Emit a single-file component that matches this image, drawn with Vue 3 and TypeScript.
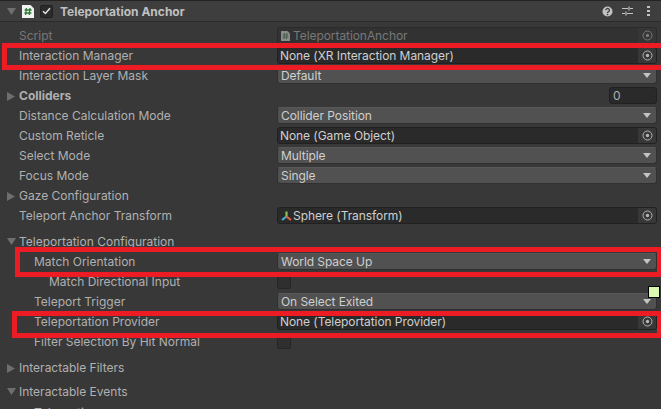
<script setup lang="ts">
type Kind = 'none' | 'object' | 'dropdown' | 'toggle' | 'number' | 'script' | 'transform'
interface Row {
  label: string
  level?: number
  fold?: 'open' | 'closed'
  bold?: boolean
  dim?: boolean
  kind: Kind
  value?: string
  gap?: number
}
const rows: Row[] = [
  { label: 'Script', kind: 'script', value: 'TeleportationAnchor', dim: true },
  { label: 'Interaction Manager', kind: 'object', value: 'None (XR Interaction Manager)' },
  { label: 'Interaction Layer Mask', kind: 'dropdown', value: 'Default' },
  { label: 'Colliders', kind: 'number', value: '0', fold: 'closed', bold: true },
  { label: 'Distance Calculation Mode', kind: 'dropdown', value: 'Collider Position' },
  { label: 'Custom Reticle', kind: 'object', value: 'None (Game Object)' },
  { label: 'Select Mode', kind: 'dropdown', value: 'Multiple' },
  { label: 'Focus Mode', kind: 'dropdown', value: 'Single' },
  { label: 'Gaze Configuration', kind: 'none', fold: 'closed' },
  { label: 'Teleport Anchor Transform', kind: 'transform', value: 'Sphere (Transform)' },
  { label: 'Teleportation Configuration', kind: 'none', fold: 'open', gap: 6 },
  { label: 'Match Orientation', kind: 'dropdown', value: 'World Space Up', level: 1 },
  { label: 'Match Directional Input', kind: 'toggle', level: 2 },
  { label: 'Teleport Trigger', kind: 'dropdown', value: 'On Select Exited', level: 1 },
  { label: 'Teleportation Provider', kind: 'object', value: 'None (Teleportation Provider)', level: 1 },
  { label: 'Filter Selection By Hit Normal', kind: 'toggle', level: 1 },
  { label: 'Interactable Filters', kind: 'none', fold: 'closed', gap: 6 },
  { label: 'Interactable Events', kind: 'none', fold: 'open', gap: 4 },
  { label: 'Teleporting', kind: 'none', level: 1, gap: 1 },
]
const rowStyle = (r: Row) => ({ marginTop: `${r.gap ?? 0}px`, paddingLeft: `${19 + (r.level ?? 0) * 15}px` })
</script>

<template>
  <div class="inspector">
    <header class="head">
      <svg class="tri" width="9" height="7" viewBox="0 0 9 7"><path d="M0 0h9L4.5 7z" fill="#6e6e6e" /></svg>
      <svg class="script-ico" width="12" height="13" viewBox="0 0 12 13">
        <path d="M0 0h8.5L12 3.5V13H0z" fill="#f2f2f2" />
        <path d="M4.4 3 3.6 10M8 3l-.8 7M2.6 5h7M2.4 8h7" stroke="#2c7a35" stroke-width="1.3" fill="none" />
      </svg>
      <span class="check">
        <svg width="9" height="8" viewBox="0 0 9 8"><path d="M1 4.2 3.4 6.5 8 1.2" stroke="#e4e4e4" stroke-width="1.5" fill="none" /></svg>
      </span>
      <span class="title">Teleportation Anchor</span>
      <span class="actions">
        <svg width="11" height="11" viewBox="0 0 11 11">
          <circle cx="5.5" cy="5.5" r="5" fill="#c2c2c2" />
          <path d="M3.8 4.2a1.8 1.7 0 1 1 2.7 1.5c-.6.4-1 .6-1 1.3" stroke="#3e3e3e" stroke-width="1.3" fill="none" />
          <rect x="4.8" y="7.8" width="1.4" height="1.4" fill="#3e3e3e" />
        </svg>
        <svg class="sliders" width="11" height="10" viewBox="0 0 11 10">
          <path d="M0 2.5h6M8 2.5h3M0 7.5h3M5 7.5h6M7 .5v4M4 5.5v4" stroke="#c2c2c2" stroke-width="1.2" fill="none" />
        </svg>
        <svg class="dots" width="3" height="10" viewBox="0 0 3 10">
          <path d="M0 0h3v2H0zM0 4h3v2H0zM0 8h3v2H0z" fill="#c2c2c2" />
        </svg>
      </span>
    </header>

    <div class="rows">
      <div v-for="r in rows" :key="r.label" class="row" :style="rowStyle(r)">
        <span class="label" :class="{ bold: r.bold, dim: r.dim }">
          <svg v-if="r.fold === 'open'" class="fold" width="9" height="7" viewBox="0 0 9 7"><path d="M0 0h9L4.5 7z" fill="#6e6e6e" /></svg>
          <svg v-else-if="r.fold === 'closed'" class="fold" width="8" height="9" viewBox="0 0 8 9"><path d="M0 0l8 4.5L0 9z" fill="#6e6e6e" /></svg>
          {{ r.label }}
        </span>

        <div v-if="r.kind === 'dropdown'" class="field dropdown">
          <span>{{ r.value }}</span>
          <svg width="8" height="5" viewBox="0 0 8 5"><path d="M0 0h8L4 5z" fill="#c4c4c4" /></svg>
        </div>

        <div v-else-if="r.kind === 'object' || r.kind === 'transform' || r.kind === 'script'" class="field object" :class="{ disabled: r.kind === 'script' }">
          <svg v-if="r.kind === 'script'" class="page" width="9" height="10" viewBox="0 0 9 10">
            <path d="M0 0h6.5L9 2.5V10H0z" fill="#8a8a8a" />
            <path d="M3.4 2 2.9 8M6 2l-.5 6M1.8 4h5.4M1.8 6.2h5.4" stroke="#4a5f4c" stroke-width="1" fill="none" />
          </svg>
          <svg v-if="r.kind === 'transform'" class="axes" width="11" height="10" viewBox="0 0 11 10">
            <path d="M5.5 5.5V0.5" stroke="#86c24f" stroke-width="2.2" />
            <path d="M5.5 5.5 1 9" stroke="#3fb0dc" stroke-width="2.2" />
            <path d="M5.5 5.5 10 9" stroke="#e2603c" stroke-width="2.2" />
          </svg>
          <span class="val">{{ r.value }}</span>
          <span class="picker">
            <svg width="11" height="11" viewBox="0 0 11 11">
              <circle cx="5.5" cy="5.5" r="4.5" fill="none" stroke="currentColor" stroke-width="1" />
              <circle cx="5.5" cy="5.5" r="1.7" fill="currentColor" />
            </svg>
          </span>
        </div>

        <div v-else-if="r.kind === 'toggle'" class="field-slot"><span class="toggle"></span></div>

        <div v-else-if="r.kind === 'number'" class="field-slot end"><span class="number">{{ r.value }}</span></div>
      </div>
    </div>

    <div class="mark m1"></div>
    <div class="mark m2"></div>
    <div class="mark m3"></div>
    <div class="swatch"></div>
  </div>
</template>

<style scoped>
.inspector {
  position: relative;
  width: 661px;
  height: 409px;
  overflow: hidden;
  background: #383838;
  color: #bdbdbd;
  font-family: Inter, "Liberation Sans", sans-serif;
  font-size: 12px;
}
.head {
  height: 22px;
  box-sizing: border-box;
  display: flex;
  align-items: center;
  background: #3e3e3e;
  border-top: 1px solid #232323;
  border-bottom: 1px solid #2b2b2b;
  padding-left: 7px;
}
.tri { flex: none; }
.script-ico { margin-left: 6px; flex: none; }
.check {
  margin-left: 6px;
  width: 13px;
  height: 13px;
  box-sizing: border-box;
  display: flex;
  align-items: center;
  justify-content: center;
  background: #2b2b2b;
  border: 1px solid #202020;
  border-radius: 2px;
}
.title {
  margin-left: 7px;
  font-weight: 700;
  color: #c0c0c0;
}
.actions {
  margin-left: auto;
  display: flex;
  align-items: center;
  padding-right: 11px;
}
.sliders { margin-left: 9px; }
.dots { margin-left: 14px; }
.rows {
  padding-top: 3px;
}
.row {
  position: relative;
  height: 20px;
  box-sizing: border-box;
  display: flex;
  align-items: center;
}
.label {
  position: relative;
  white-space: nowrap;
  color: #b0b0b0;
}
.label.bold { font-weight: 700; }
.label.dim { color: #777; }
.fold {
  position: absolute;
  left: -12px;
  top: 4px;
}
.field, .field-slot {
  position: absolute;
  left: 277px;
  width: 380px;
  box-sizing: border-box;
}
.field {
  top: 2px;
  height: 17px;
  display: flex;
  align-items: center;
  border-radius: 3px;
  color: #cfcfcf;
  letter-spacing: -0.07px;
}
.dropdown {
  background: #515151;
  border: 1px solid #303030;
  border-top-color: #585858;
  padding-left: 3px;
  justify-content: space-between;
}
.dropdown svg { margin-right: 5px; }
.object {
  background: #2a2a2a;
  border: 1px solid #212121;
  padding-left: 2px;
}
.object .val { flex: 1; white-space: nowrap; }
.object.disabled { background: #323232; border-color: #2b2b2b; color: #787878; }
.page { margin: 0 3px 0 1px; }
.axes { margin: 0 1px 0 1px; }
.picker {
  width: 18px;
  height: 15px;
  display: flex;
  align-items: center;
  justify-content: center;
  background: #383838;
  color: #b4b4b4;
  border-radius: 0 2px 2px 0;
}
.disabled .picker { color: #7a7a7a; background: #363636; }
.field-slot {
  top: 5px;
  display: flex;
}
.field-slot.end { justify-content: flex-end; top: 2px; }
.toggle {
  width: 14px;
  height: 13px;
  box-sizing: border-box;
  background: #2f2f2f;
  border: 1px solid #262626;
  border-radius: 2px;
}
.number {
  width: 48px;
  height: 17px;
  box-sizing: border-box;
  padding-left: 3px;
  line-height: 15px;
  background: #2a2a2a;
  border: 1px solid #212121;
  border-radius: 3px;
  color: #b0b0b0;
}
.mark {
  position: absolute;
  box-sizing: border-box;
  border: 5px solid #ed1c24;
  pointer-events: none;
}
.m1 { left: 2px; top: 43px; width: 665px; height: 27px; }
.m2 { left: 15px; top: 247px; width: 646px; height: 30px; border-right-width: 4px; }
.m3 { left: 12px; top: 311px; width: 649px; height: 27px; border-right-width: 4px; }
.swatch {
  position: absolute;
  left: 648px;
  top: 286px;
  width: 12px;
  height: 12px;
  box-sizing: border-box;
  background: #d9f9b1;
  border: 1px solid #000;
}
</style>
